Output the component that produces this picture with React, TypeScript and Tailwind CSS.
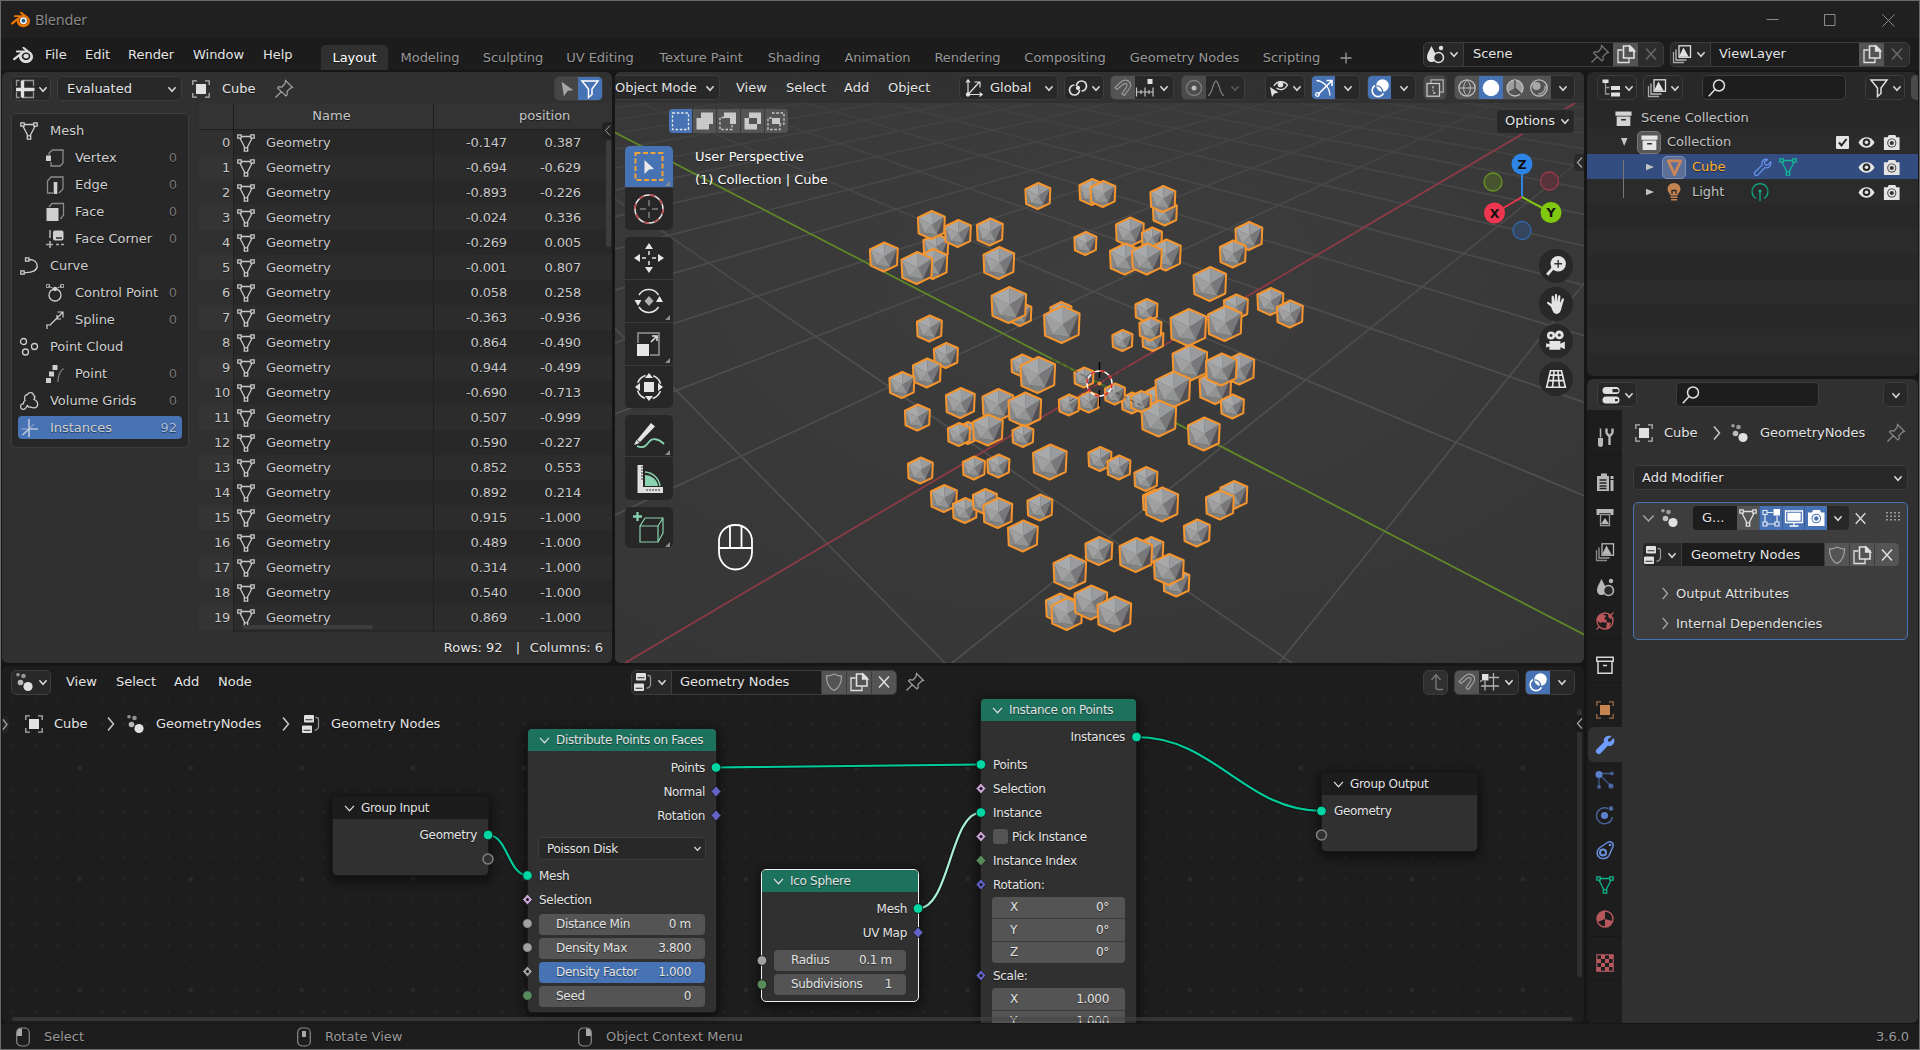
import React from "react";
import { SiBlender } from "react-icons/si";

type Kids = { children?: React.ReactNode };

const ICONS: Record<string, React.ReactNode> = {
  chev: <path d="M6 8l4 4.5L14 8" strokeWidth="1.7" />,
  bigChev: <path d="M4 6.500L10 13l6-6.500" strokeWidth="1.600" />,
  right: <path d="M8 3.5l5.5 6.5L8 16.5" strokeWidth="1.5" />,
  close: <path d="M5 4.5l10 11M15 4.5l-10 11" strokeWidth="1.5" />,
  plus: <path d="M10 4.5v11M4.5 10h11" />,
  mesh: <path d="M1.8 1.8h3.4v3.4H1.8zM14.8 1.8h3.4v3.4h-3.4zM8.3 14.8h3.4v3.4H8.3zM5.2 3.5h9.6M4 5.2L8.9 14.8M16 5.2L11.1 14.8" />,
  vertex: (<><path d="M4 7V5l3.5-3H18v13l-3 3H6V14" opacity=".6" /><rect x="1" y="7.5" width="5" height="5.5" fill="currentColor" stroke="none" /></>),
  edge: (<><path d="M8 18H2.5V6L6 2h12v12l-4 4" opacity=".6" /><path d="M10.5 7v12" strokeWidth="3.6" /></>),
  face: (<><path d="M4 5l3-3.5h11.5V13L15.500 17" opacity=".6" /><rect x="1.500" y="6" width="12" height="13" fill="currentColor" stroke="none" /></>),
  corner: (<><path d="M5 1v8M5 12v7M1 15.5h7M11 15.500h3M16 15.500h3" strokeWidth="1.600" opacity=".8" /><rect x="8" y="1.500" width="10.500" height="10" rx="2" fill="currentColor" stroke="none" /><path d="M11 9h6" stroke="#282828" /></>),
  curve: <path d="M6.500 1.800h3.400v3.400H6.500zM1.800 14.800h3.400v3.400H1.800zM9.900 3.500c5 0 8.300 2.500 8.300 6.500s-4 7-13 6.500" />,
  ctrl: (<><circle cx="10" cy="12" r="6" /><path d="M3 3l7 3 7-3M1.500 1.500h3v3h-3zM15.500 1.500h3v3h-3z" strokeWidth="1" opacity=".75" /><circle cx="10" cy="6" r="1.500" fill="currentColor" /></>),
  spline: <path d="M2 19v-4M1 15h5M5 15L18 2M12.500 2H18v5.500M12 5v4h4" strokeWidth="1.200" />,
  cloud3: (<><circle cx="4.500" cy="4.500" r="3" /><circle cx="15.500" cy="9.500" r="3" /><circle cx="6.500" cy="15" r="3" /></>),
  point: (<><path d="M18.500 4.500c-4 3-5.500 8-5.500 13.500" opacity=".5" /><path d="M7.500 1h5v5h-5zM4 7.500h5v5H4zM1 14h5v5H1z" fill="currentColor" stroke="none" /></>),
  volume: <path d="M3.500 18.300c-2.500-.8-2.500-4.300-.5-5.300l1.500-.3c-.3-1.500.3-2.500 1.500-3.200C4.500 6 6.500 3.500 8.500 3.500 9.500 1 14 1 14.500 4c1.500 1 1.500 3 .5 4.500 3.500 1 4.500 4.500 3 7-2 2-4.500 1.500-6.500.5-1.500.5-3-.5-3-2-1 2.500-2.500 5-5 4.300z" />,
  inst: (<><path d="M10 1v18M10 11h9M10 11l-6.500 6" strokeWidth="1.600" /><path d="M2 11h8M10 11l5-5" opacity=".5" /></>),
  sheet: (<><path d="M1.500 7V1.500h3M7 1.500h11.500V7M1.500 13v5.500h3M7 18.500h11.500V13" opacity=".6" /><path d="M7.500 1.500v17M1 10.500h18.500" strokeWidth="3.400" /></>),
  object: (<><path d="M1.800 6V1.800H6M14 1.800h4.200V6M18.200 14v4.200H14M6 18.200H1.800V14" opacity=".75" /><rect x="5" y="5" width="10" height="10" fill="currentColor" stroke="none" /></>),
  pin: <path d="M11.500 1.500L18.500 8.500l-2 .6-3.500 3.400.2 3.200-1.300 1.300L3.500 9l1.300-1.300 3.200.3 3-3.300zM7.500 12.500L1.500 18.500" strokeWidth="1.200" />,
  cursor: <path d="M4 2l13 9.500-6 .5-4.500 6z" fill="currentColor" stroke="none" />,
  funnel: <path d="M2 2h16l-6 8v5.500L8.500 18.500V10z" strokeWidth="1.500" />,
  scene: (<><path d="M6.500 2C9 7 11 10 11 13c0 3-2 5-4.500 5S2 16 2 13c0-3 2-6 4.500-11z" fill="currentColor" stroke="none" /><circle cx="13.500" cy="13.500" r="5" fill="#282828" strokeWidth="1.500" /><circle cx="16" cy="4" r="2.200" fill="currentColor" stroke="none" /></>),
  layers: (<><path d="M1.500 8v10.500H12" opacity=".7" /><path d="M4 5.500V16h10.500" opacity=".8" /><rect x="7" y="1.800" width="11.500" height="11.500" /><path d="M8 12l3.500-7 4 7z" fill="currentColor" /></>),
  copy: (<><path d="M6.500 6H2v12.500h11V14" /><path d="M7.500 2h6.500l4 4v8H7.500z" strokeWidth="1.600" /><path d="M13.500 2l5 5h-5z" fill="currentColor" /></>),
  axes: (<><path d="M4 16.500V2M2 4.500L4 1.800l2 2.700M3 16.500h15M15.500 14.500l2.700 2-2.700 2M4.500 16L15 4.500M10.500 4H16v5.500" strokeWidth="1.200" /><circle cx="4" cy="16.500" r="1.500" fill="currentColor" /></>),
  pivot: (<><path d="M8.500 8a5 5 0 1 1 5 5M11.500 12a5 5 0 1 1-5-5" strokeWidth="1.700" /><circle cx="10" cy="10" r="1.500" fill="currentColor" /></>),
  magnet: <path d="M2 9.500L8.500 3.500c3-2.500 8-1.500 9 2.500 1 4-2 5-6 11.500l-2.500-1.500c3-6 6-7 5-9.500-1-1.500-3-1-4 0L4 11.500z" strokeWidth="1.200" />,
  incr: (<><path d="M1.500 9.500v9M6 12v4M10 9.500v9M14 12v4M18 9.500v9M1.500 14h16.500" strokeWidth="1.200" opacity=".85" /><rect x="12.500" y="1" width="5" height="5" fill="currentColor" stroke="none" /></>),
  prop: (<><circle cx="10" cy="10" r="7.500" /><circle cx="10" cy="10" r="2.500" fill="#bbb" stroke="none" /></>),
  bell: <path d="M2 17.500c4 0 5-14.500 8-14.500s4 14.500 8 14.500" />,
  vis: (<><path d="M5 8c3-5.500 10.500-5.500 13.500-1-3 5.500-8 5.500-11 3" /><circle cx="11.500" cy="6.500" r="2.200" fill="currentColor" /><path d="M1 9l8.500 5.500-4 1-2.500 3.500z" fill="currentColor" stroke="none" /></>),
  gizmo: (<><path d="M2.500 2.500c8 1 13 7 13.500 15" /><path d="M4 16.500L17.500 3M12.500 2.500h5.500V8" strokeWidth="1.600" /><circle cx="3.500" cy="16.500" r="1.800" /></>),
  overlay: (<><circle cx="12.500" cy="7.500" r="6.300" fill="currentColor" stroke="none" /><path d="M5 7.500a6 6 0 1 0 8.500 7.800" strokeWidth="1.600" /><path d="M6.500 8a5.500 5.500 0 0 1 6 6" stroke="#4772b3" strokeWidth="1.300" /></>),
  xray: (<><path d="M6 5.500V1.800h12.200v12.400H15" opacity=".8" /><rect x="2" y="5.500" width="12.500" height="12.700" /><path d="M8 8v5M8 15h3" strokeWidth="1.300" strokeDasharray="2.500 1.500" /></>),
  wire: (<><circle cx="10" cy="10" r="8.200" /><path d="M2 10h16M10 2c-4.500 4-4.500 12 0 16M10 2c4.500 4 4.500 12 0 16" strokeWidth="1" /></>),
  solid: <circle cx="10" cy="10" r="8.300" fill="currentColor" stroke="none" />,
  matprev: (<><circle cx="10" cy="10" r="8" /><path d="M10 2a8 8 0 0 0-7 12l7-4zM10 10l6.500 5A8 8 0 0 0 10 2" fill="currentColor" stroke="none" opacity=".7" /><path d="M10 2v8l6 6" stroke="#444" /></>),
  render: (<><circle cx="10" cy="10" r="8.200" /><circle cx="7.500" cy="8" r="4" fill="currentColor" stroke="none" opacity=".8" /><path d="M16 8a6.500 6.500 0 0 1-7 8" strokeWidth="1.600" opacity=".7" /></>),
  outl: (<><path d="M4.500 5v11h4M4.500 9.500h4" opacity=".6" /><path d="M1.500 1.500h6v3.500h-6zM10 8h9v4h-9zM10 14.500h9v4h-9z" fill="currentColor" stroke="none" /></>),
  search: (<><circle cx="12" cy="7.500" r="5.500" strokeWidth="1.500" /><path d="M8 11.500L1.800 18.200" strokeWidth="1.500" /></>),
  coll: (<><path d="M1.500 2.500h17v4.500h-17zM2.800 8h14.400v10H2.800z" fill="currentColor" stroke="none" /><path d="M7.500 11.300h5" stroke="#282828" strokeWidth="1.700" /></>),
  collO: <path d="M1.800 2.300h16.400v4H1.800zM3 6.300h14v11.900H3zM8 10.500h4" strokeWidth="1.500" />,
  eye: (<><path d="M1.500 10c4-7.500 13-7.500 17 0-4 7.500-13 7.500-17 0z" fill="currentColor" stroke="none" /><circle cx="10" cy="9.800" r="4" fill="#282828" stroke="none" /><circle cx="10" cy="9.800" r="1.900" fill="currentColor" stroke="none" /></>),
  cam: (<><path d="M2 4.500h4L7 2h7l1 2.500h3.500V18H2z" fill="currentColor" stroke="none" /><circle cx="10.300" cy="10.500" r="4.800" fill="#333" stroke="none" /><circle cx="10.300" cy="10.500" r="3" fill="none" strokeWidth="1.600" /></>),
  camB: (<><path d="M2 4.500h4L7 2h7l1 2.500h3.500V18H2z" fill="currentColor" stroke="none" /><circle cx="10.300" cy="10.500" r="4.800" fill="#4772b3" stroke="none" /><circle cx="10.300" cy="10.500" r="3" fill="none" strokeWidth="1.600" /></>),
  meshObj: <path d="M3.500 3h13L10 17.500z" strokeWidth="3" strokeLinejoin="round" />,
  bulb: (<><path d="M10 1c4 0 6.500 3 6.500 6 0 3-2.500 4-3 6.500h-7C6 11 3.500 10 3.500 7c0-3 2.500-6 6.500-6zM6.500 14.500h7v1.500h-7zM7 17h6v1.500H7z" fill="currentColor" stroke="none" /><path d="M8 12V8.500h4V12" stroke="#2b2b2b" /></>),
  lightD: (<><path d="M6 16.500a8 8 0 1 1 8 0" /><circle cx="10" cy="9" r="1.600" fill="currentColor" stroke="none" /><path d="M10 10v9M10 13v6" strokeDasharray="3 1.200" /></>),
  wrench: <path d="M15.500 1.500c-4-1-7 2-5.800 5.800L2 15c-1.500 1.500 1 4.500 3 3l7.500-8c4 1.500 7-2 6-6L15.500 7.500l-3-.5-.3-3z" strokeLinejoin="round" />,
  wrenchF: <path d="M15.500 1.500c-4-1-7 2-5.800 5.800L2 15c-1.500 1.500 1 4.500 3 3l7.500-8c4 1.500 7-2 6-6L15.500 7.500l-3-.5-.3-3z" fill="currentColor" strokeLinejoin="round" />,
  props: (<><rect x="1.500" y="2" width="17" height="7" rx="3.500" fill="currentColor" stroke="none" /><rect x="1.500" y="11.500" width="17" height="7" rx="3.500" fill="currentColor" stroke="none" /><path d="M11.500 4h4.500a1.600 1.600 0 0 1 0 3.200h-4.500z" fill="#282828" stroke="none" /><path d="M14 14h2a1 1 0 0 1 0 2.200h-2z" fill="#282828" stroke="none" /></>),
  geo: (<><circle cx="13" cy="14.500" r="4.600" fill="currentColor" stroke="none" /><circle cx="5.500" cy="10.500" r="2.800" fill="currentColor" stroke="none" opacity=".8" /><circle cx="8.500" cy="4" r="2.300" fill="currentColor" stroke="none" opacity=".6" /><circle cx="3" cy="2.800" r="1.800" fill="currentColor" stroke="none" opacity=".6" /></>),
  tree: (<><rect x="3" y="1" width="10" height="7.500" rx="1" fill="currentColor" stroke="none" /><rect x="1" y="11.500" width="10" height="7.500" rx="1" fill="currentColor" stroke="none" /><path d="M4.500 5.700h7M2.500 16.200h7" stroke="#282828" strokeWidth="1.100" /><path d="M14.500 3.500h1a2 2 0 0 1 2 2v7.500a3.500 3.500 0 0 1-4 3" opacity=".6" /></>),
  shield: <path d="M10 2c2.500 1.500 5 2 7.500 2 0 7-1.500 11.500-7.500 14.500C4 15.500 2.500 11 2.500 4 5 4 7.500 3.500 10 2z" />,
  tool: (<><path d="M5.500 1.500v9" strokeWidth="1.500" /><path d="M3 11h5v7a2.500 2 0 0 1-5 0z" fill="currentColor" stroke="none" /><path d="M11.500 1.500v4c0 2 3 2.500 3 4.500v8M17.500 1.500v4c0 2-3 2.500-3 4.500" strokeWidth="2.400" /></>),
  rend: (<><path d="M2 4h4V1.500h6V4h2v15H2zM15.500 4h3v3h-3zM15.500 8h3v11h-3z" fill="currentColor" stroke="none" /><path d="M4.500 8h7M4.500 11h7M4.500 14h7M4.500 16.500h7" stroke="#222" strokeWidth="1.300" /></>),
  outp: (<><path d="M1.500 2h17v6h-3V6h-11v2h-3z" fill="currentColor" stroke="none" /><path d="M5.500 7.500h9V18.500h-9z" opacity=".8" /><path d="M6 17l4-6 4 6z" fill="currentColor" stroke="none" /></>),
  world: (<><circle cx="10" cy="10" r="8" strokeWidth="1.400" /><path d="M3 5l5-2 3 2-2 3 3 1-1 3-3-1-3 1-3-3zM12 11l4 1-2 5-3 1zM14 3l3 4-2 1-2-3z" fill="currentColor" stroke="none" /><path d="M1.500 18.500l3-3M18.500 1.500l-3 3" /></>),
  part: (<><circle cx="4" cy="4.500" r="3.500" fill="currentColor" stroke="none" /><path d="M5 5l11 11M4 6v11M6 3.500h11" opacity=".6" /><circle cx="16" cy="16" r="2.600" fill="currentColor" stroke="none" opacity=".7" /><circle cx="4" cy="17" r="2" fill="currentColor" stroke="none" opacity=".6" /><circle cx="17" cy="3.500" r="1.900" fill="currentColor" stroke="none" opacity=".6" /></>),
  phys: (<><circle cx="9.500" cy="10.500" r="3.600" fill="currentColor" stroke="none" /><path d="M13 3.500A8 8 0 1 0 17.500 12M14 18a8 8 0 0 0 3-5" opacity=".7" strokeWidth="1.500" /><circle cx="16" cy="3.500" r="2.300" fill="currentColor" stroke="none" opacity=".8" /></>),
  cons: (<><path d="M12.500 2.500c3-2 6.500.5 5.500 4l-4 9c-2.500 4.500-9.500 4-11.500-.5-1-3.500.5-6 2.500-7.500z" strokeWidth="1.500" /><circle cx="8" cy="12.500" r="3" strokeWidth="2" /><circle cx="15" cy="5" r="1.300" fill="currentColor" stroke="none" /></>),
  mater: (<><circle cx="10" cy="10" r="8" strokeWidth="1.400" /><path d="M10 2v8l-7.500 3A8 8 0 0 1 10 2zM10 10l7.500 2A8 8 0 0 1 10 18z" fill="currentColor" stroke="none" /></>),
  tex: (<><rect x="1.800" y="1.800" width="16.400" height="16.400" strokeWidth="1.200" /><path d="M6 2h4v4H6zM14 2h4v4h-4zM2 6h4v4H2zM10 6h4v4h-4zM6 10h4v4H6zM14 10h4v4h-4zM2 14h4v4H2zM10 14h4v4h-4z" fill="currentColor" stroke="none" /></>),
  up: <path d="M10 3v12.500q0 2 2 2h5M5.500 8L10 2.500 14.500 8" strokeWidth="1.400" />,
  snapgrid: (<><path d="M1 8v2M9 14h10M1 14h18M13.500 1v17.500M5 9v9.500M9 5.500h10" opacity=".75" /><rect x="2" y="2" width="6.500" height="6.500" fill="currentColor" stroke="none" /></>),
  editm: (<><path d="M2 2.500h4v4H2zM2 14h4v4H2zM14 14h4v4h-4zM6 4.500h6M4 6.500V14M6 16h8M16 8v6" strokeWidth="1.200" opacity=".85" /><rect x="12.500" y="1" width="6.500" height="6.500" fill="currentColor" stroke="none" /></>),
  monitor: (<><path d="M1.500 3h17v11.500h-17z" /><path d="M4 5.500h12v6.500H4z" fill="currentColor" /><path d="M10 15v3M5.500 18h9" /></>),
};

function Icon({ n, c = "text-[#e0e0e0]", s = "size-5" }: { n: string; c?: string; s?: string }) {
  return (
    <svg viewBox="0 0 20 20" className={`${s} ${c} shrink-0`} fill="none" stroke="currentColor" strokeWidth="1.3">
      {ICONS[n]}
    </svg>
  );
}

const Chev = ({ c = "text-[#d8d8d8]" }: { c?: string }) => <Icon n="chev" c={c} s="size-[18px]" />;

function Group({ w, children, dim = "" }: Kids & { w: string; dim?: string }) {
  return <div className={`flex h-[25px] shrink-0 items-stretch overflow-hidden rounded-[5px] border border-[#3d3d3d] bg-[#282828] ${w} ${dim}`}>{children}</div>;
}

function Cell({ w = "w-6", bg = "", children }: Kids & { w?: string; bg?: string }) {
  return <div className={`flex shrink-0 items-center justify-center ${w} ${bg}`}>{children}</div>;
}

const EditorButton = ({ n }: { n: string }) => (
  <Group w="w-10">
    <div className="flex items-center pl-[3px]">
      <Icon n={n} />
      <div className="-ml-px flex"><Chev /></div>
    </div>
  </Group>
);

const Label = ({ w, children, c = "text-[#e5e5e5]" }: Kids & { w: string; c?: string }) => (
  <div className={`shrink-0 ${w} ${c}`}>{children}</div>
);

/* ---------- top bars ---------- */

function TitleBar() {
  return (
    <div className="flex h-[37px] items-center bg-[#202020] pl-[10px]">
      <div className="relative flex w-6">
        <SiBlender className="size-[19px] text-[#ea7600]" />
        <svg viewBox="0 0 24 24" className="absolute left-0 top-0 size-[19px]">
          <circle cx="15.700" cy="13.500" r="4.400" fill="#fff" />
          <circle cx="15.700" cy="13.500" r="2.500" fill="#265787" />
        </svg>
      </div>
      <div className="pt-px font-['Open_Sans'] text-[14.500px] tracking-[-0.150px] text-[#8c8c8c]">Blender</div>
      <svg viewBox="0 0 160 20" className="ml-auto mr-[13px] h-5 w-40 text-[#8c8c8c]" fill="none" stroke="currentColor">
        <path d="M20.500 9.500h12M78.500 4.500h10.500v11H78.500zM136.500 4.500l12 12M148.500 4.500l-12 12" />
      </svg>
    </div>
  );
}

function TopBar() {
  const tab = "flex h-full shrink-0 items-center justify-center text-[#989898]";
  return (
    <div className="flex h-8 items-stretch bg-[#1c1c1c] pl-[12px]">
      <div className="flex w-8 items-center pt-px"><SiBlender className="size-5 text-[#dcdcdc]" /></div>
      <div className="flex items-center pt-px">
        <Label w="w-10">File</Label>
        <Label w="w-[43px]">Edit</Label>
        <Label w="w-[65px]">Render</Label>
        <Label w="w-[70px]">Window</Label>
        <Label w="w-[58px]">Help</Label>
      </div>
      <div className="flex h-[25px] self-end">
        <div className="flex w-[67px] items-center justify-center rounded-t-[5px] bg-[#303030] text-white">Layout</div>
        <div className={`${tab} w-[84px]`}>Modeling</div>
        <div className={`${tab} w-[82px]`}>Sculpting</div>
        <div className={`${tab} w-[92px]`}>UV Editing</div>
        <div className={`${tab} w-[110px]`}>Texture Paint</div>
        <div className={`${tab} w-[76px]`}>Shading</div>
        <div className={`${tab} w-[91px]`}>Animation</div>
        <div className={`${tab} w-[89px]`}>Rendering</div>
        <div className={`${tab} w-[106px]`}>Compositing</div>
        <div className={`${tab} w-[133px]`}>Geometry Nodes</div>
        <div className={`${tab} w-[81px]`}>Scripting</div>
        <div className={`${tab} w-[28px]`}><Icon n="plus" c="text-[#989898]" /></div>
      </div>
      <div className="ml-auto flex items-center gap-[6px] pr-[9px]">
        <Group w="w-[241px]">
          <Cell w="w-[39px]"><Icon n="scene" /><Chev /></Cell>
          <div className="flex flex-1 items-center justify-between border-l border-[#3d3d3d] bg-[#1d1d1d] pl-[9px] pr-[3px] text-[#e5e5e5]">Scene<Icon n="pin" c="text-[#777]" /></div>
          <Cell w="w-[25px]" bg="bg-[#545454]"><Icon n="copy" /></Cell>
          <Cell w="w-[25px]" bg="bg-[#2d2d2d]"><Icon n="close" c="text-[#6a6a6a]" /></Cell>
        </Group>
        <Group w="w-[240px]">
          <Cell w="w-[39px]"><Icon n="layers" /><Chev /></Cell>
          <div className="flex flex-1 items-center border-l border-[#3d3d3d] bg-[#1d1d1d] pl-[8px] text-[#e5e5e5]">ViewLayer</div>
          <Cell w="w-[25px]" bg="bg-[#545454]"><Icon n="copy" /></Cell>
          <Cell w="w-[25px]" bg="bg-[#2d2d2d]"><Icon n="close" c="text-[#6a6a6a]" /></Cell>
        </Group>
      </div>
    </div>
  );
}

/* ---------- spreadsheet ---------- */

const TREE: [string, string, string, boolean][] = [
  ["mesh", "Mesh", "", false],
  ["vertex", "Vertex", "0", true],
  ["edge", "Edge", "0", true],
  ["face", "Face", "0", true],
  ["corner", "Face Corner", "0", true],
  ["curve", "Curve", "", false],
  ["ctrl", "Control Point", "0", true],
  ["spline", "Spline", "0", true],
  ["cloud3", "Point Cloud", "", false],
  ["point", "Point", "0", true],
  ["volume", "Volume Grids", "0", false],
  ["inst", "Instances", "92", false],
];

const ROWS: [string, string][] = [
  ["-0.147", "0.387"], ["-0.694", "-0.629"], ["-0.893", "-0.226"], ["-0.024", "0.336"], ["-0.269", "0.005"],
  ["-0.001", "0.807"], ["0.058", "0.258"], ["-0.363", "-0.936"], ["0.864", "-0.490"], ["0.944", "-0.499"],
  ["-0.690", "-0.713"], ["0.507", "-0.999"], ["0.590", "-0.227"], ["0.852", "0.553"], ["0.892", "0.214"],
  ["0.915", "-1.000"], ["0.489", "-1.000"], ["0.314", "-1.000"], ["0.540", "-1.000"], ["0.869", "-1.000"],
];

function Spreadsheet() {
  return (
    <section className="relative flex w-[610px] shrink-0 flex-col overflow-hidden rounded-[6px] bg-[#303030]">
      <div className="flex h-[31px] shrink-0 items-center pl-[9px] pt-[2px]">
        <EditorButton n="sheet" />
        <div className="ml-[6px] flex">
          <Group w="w-[125px]">
            <div className="flex flex-1 items-center justify-between pl-[9px] text-[#e5e5e5]">Evaluated<Chev /></div>
          </Group>
        </div>
        <div className="ml-[9px] flex w-[31px]"><Icon n="object" /></div>
        <Label w="w-[52px]">Cube</Label>
        <Icon n="pin" c="text-[#a0a0a0]" />
        <div className="ml-auto flex pr-[9px]">
          <Group w="w-[49px]">
            <Cell w="w-[23px]" bg="bg-[#454545]"><Icon n="cursor" c="text-[#a5a5a5]" s="size-[18px]" /></Cell>
            <Cell w="w-6" bg="bg-[#4772b3]"><Icon n="funnel" c="text-white" /></Cell>
          </Group>
        </div>
      </div>
      <div className="flex h-[529px] shrink-0">
        <div className="w-[197px] shrink-0 pl-[9px] pt-[10px]">
          <div className="w-[178px] rounded-[5px] border border-[#3d3d3d] bg-[#272727] px-[6px] pb-[6px] pt-[3px]">
            {TREE.map(([ic, label, n, child]) => (
              <div key={label} className={`flex h-[27px] items-center ${child ? "pl-[27px]" : "pl-px"}`}>
                <div className={`flex h-[23px] flex-1 items-center rounded-[4px] ${n === "92" ? "-ml-px bg-[#4772b3] pl-px" : ""}`}>
                  <Icon n={ic} c={n === "92" ? "text-[#b9c6dc]" : "text-[#cfcfcf]"} />
                  <span className={`${child ? "pl-[10px]" : "pl-[11px]"} text-[#cfcfcf]`}>{label}</span>
                  <span className={`ml-auto pr-[5px] ${n === "92" ? "text-[#a9bad6]" : "text-[#757575]"}`}>{n}</span>
                </div>
              </div>
            ))}
          </div>
        </div>
        <div className="flex min-w-0 flex-1 flex-col">
          <div className="flex h-[27px] shrink-0 items-center border-b border-[#1f1f1f] bg-[#333] text-[#c4c4c4]">
            <div className="h-full w-[35px] border-r border-[#1f1f1f]" />
            <div className="flex h-full w-[200px] items-center justify-center border-r border-[#1f1f1f] pr-[4px]">Name</div>
            <div className="pl-[85px]">position</div>
          </div>
          {ROWS.map(([a, b], i) => (
            <div key={i} className={`flex h-[25px] shrink-0 items-center text-[#c8c8c8] ${i % 2 ? "bg-[#2c2c2c]" : "bg-[#282828]"}`}>
              <div className={`flex h-full w-[35px] items-center justify-end border-r border-[#1f1f1f] pr-[3px] tracking-[-0.250px] ${i % 2 ? "bg-[#343434]" : "bg-[#303030]"}`}>{i}</div>
              <div className="flex h-full w-[200px] items-center gap-[10px] border-r border-[#1f1f1f] pl-[2px]">
                <Icon n="mesh" c="text-[#c8c8c8]" />Geometry
              </div>
              <div className="w-[73px] text-right tracking-[-0.150px]">{a}</div>
              <div className="w-[74px] text-right tracking-[-0.150px]">{b}</div>
            </div>
          ))}
          <div className="flex flex-1 bg-[#282828]">
            <div className="w-[35px] border-r border-[#1f1f1f] bg-[#303030]" />
            <div className="w-[200px] border-r border-[#1f1f1f]" />
          </div>
        </div>
      </div>
      <div className="flex flex-1 items-center justify-end pr-[9px] text-[#e0e0e0]">
        <Label w="w-[72px]">Rows: 92</Label><Label w="w-[14px]">|</Label>Columns: 6
      </div>
      <div className="absolute right-[1px] top-[68px] h-[107px] w-[5px] rounded-full bg-[#3d3d3d]" />
      <div className="absolute left-[241px] top-[553px] h-[4px] w-[130px] rounded-full bg-[#3d3d3d]" />
      <div className="absolute right-0 top-[50px] flex h-[17px] w-[10px] items-center overflow-hidden rounded-l-[4px] bg-[#232323]">
        <svg viewBox="0 0 10 17" className="h-[17px] w-[10px] shrink-0" fill="none" stroke="#a0a0a0"><path d="M8 3.500L3.500 8.500 8 13.500" /></svg>
      </div>
    </section>
  );
}

/* ---------- 3D viewport ---------- */

/* x, y, radius; painted in order, nearest last */
const SPHERES: [number, number, number][] = [
  [1038, 196, 13], [1092, 192, 13], [1103, 194, 13], [1165, 213, 12.500], [1163, 199, 13],
  [936, 247, 13], [931.500, 225, 14], [958, 233.500, 13.500], [990, 232, 13.500], [884, 257, 14.500],
  [933, 264, 15], [917, 268, 16], [999, 263, 16], [1085.500, 243.500, 11.500],
  [1130, 232, 14.500], [1152, 238, 10.500], [1166, 255, 15.500], [1125, 259, 15.500], [1147, 259, 15.500],
  [1249, 236, 14], [1233, 254, 13.500], [1210, 284, 17], [1236, 307, 12.500], [1270.500, 301.500, 13.500], [1290, 314, 13.500],
  [1020, 314, 12], [1009, 305, 18], [1061, 313, 11], [1062, 324.500, 18.500], [929.500, 328.500, 13],
  [1146.500, 310.500, 11.500], [1153, 340, 11], [1150.500, 329, 11.500], [1122.500, 340.500, 10.500],
  [1188.500, 327.500, 18.500], [1225, 323.500, 17.500], [1190, 363, 18], [1239.500, 369, 15.500], [1215.500, 387.500, 16.500],
  [1221.500, 369.500, 16], [1155, 398, 11], [1173, 389.500, 18], [1232.500, 406.500, 12], [1159, 418.500, 18], [1204, 434, 16.500],
  [1132, 403, 10.500], [1141, 401.500, 10.500], [1115, 394, 10.500], [1084, 377.500, 10], [1089, 402, 10.500], [1069, 405, 10.500],
  [946, 355.500, 12.500], [927, 373, 14.500], [902, 385, 13], [917.500, 417.500, 13], [1022, 365.500, 11], [1038, 375, 18],
  [960.500, 403, 15], [998, 405, 16], [1025, 409.500, 17], [968, 433, 11], [959, 434.500, 11.500], [988, 430, 15.500], [1023, 436, 11],
  [920.500, 470.500, 13], [974, 468, 11.500], [998.500, 466, 11.500], [1050, 462, 17.500],
  [944, 498.500, 13.500], [965, 510.500, 12.500], [985, 501.500, 12.500], [998, 513, 15], [1040, 507.500, 13], [1023, 536, 15.500],
  [1100, 459, 12], [1119, 467.500, 12], [1146, 479, 12], [1155, 502, 12.500], [1162, 504.500, 17],
  [1234, 495, 14], [1220, 505, 14.500], [1197, 533, 13.500], [1099, 551, 14], [1151, 550, 13], [1136, 555, 17],
  [1176.500, 583, 13.500], [1169, 569.500, 15.500], [1070, 572, 17], [1060, 608, 14.500], [1067, 614, 16], [1091, 602.500, 17], [1114.500, 614, 17.500],
];

const FACES: [string, string][] = [
  ["-.97,-.52 .02,-1 .05,-.02", "#a8a9aa"],
  [".02,-1 .95,-.6 .05,-.02", "#9a9b9d"],
  [".95,-.6 .4,.68 .05,-.02", "#78787a"],
  [".95,-.6 .9,.56 .4,.68", "#524e51"],
  [".9,.56 -.02,1 .4,.68", "#666567"],
  [".05,-.02 .4,.68 -.5,.55", "#939494"],
  [".4,.68 -.02,1 -.5,.55", "#7f8080"],
  ["-.97,-.52 .05,-.02 -.5,.55", "#9fa09f"],
  ["-.97,-.52 -.5,.55 -.92,.6", "#888888"],
  ["-.92,.6 -.5,.55 -.02,1", "#7e7e7f"],
];

const STEPS = Array.from({ length: 30 }, (_, k) => k - 14).filter((k) => k !== 0);

function Scene3D() {
  return (
    <svg viewBox="615 72 969 591" className="absolute inset-0 h-[591px] w-[969px]">
      <defs>
        <linearGradient id="fade" x1="0" y1="72" x2="0" y2="400" gradientUnits="userSpaceOnUse">
          <stop offset="0" stopColor="#fff" stopOpacity=".15" />
          <stop offset=".45" stopColor="#fff" stopOpacity=".75" />
          <stop offset="1" stopColor="#fff" />
        </linearGradient>
        <mask id="m" maskUnits="userSpaceOnUse" x="615" y="72" width="969" height="591">
          <rect x="615" y="72" width="969" height="591" fill="url(#fade)" />
        </mask>
        <radialGradient id="bg" cx=".5" cy=".35" r=".75">
          <stop offset="0" stopColor="#3d3d3d" />
          <stop offset="1" stopColor="#363636" />
        </radialGradient>
        <g id="ico">
          {FACES.map(([p, f]) => <polygon key={p} points={p} fill={f} stroke={f} strokeWidth=".02" />)}
          <polygon points="-.97,-.52 .02,-1 .95,-.6 .9,.56 -.02,1 -.92,.6" fill="none" stroke="#f6952d" strokeWidth="2" strokeLinejoin="round" vectorEffect="non-scaling-stroke" />
        </g>
      </defs>
      <rect x="615" y="72" width="969" height="591" fill="url(#bg)" />
      <g stroke="#4f4f4f" strokeWidth="1.700" mask="url(#m)">
        {STEPS.map((k) => <line key={`r${k}`} x1={1868} y1={-70} x2={625 + 327 * k} y2={663} />)}
        {STEPS.map((k) => <line key={`g${k}`} x1={220} y1={-72} x2={1639 + 347 * k} y2={663} />)}
      </g>
      <path d="M625 663L1575 103" stroke="#8c3b46" strokeWidth="1.800" />
      <path d="M558 103L1639 663" stroke="#608728" strokeWidth="1.800" />
      {SPHERES.map(([x, y, r], i) => (
        <use key={i} href="#ico" transform={`translate(${x} ${y}) scale(${r})`} />
      ))}
      <path d="M1070 401L1128 367M1052 359L1146 408" stroke="#222" strokeWidth="1" strokeDasharray="5 3" opacity=".6" />
      <path d="M1099.500 362v16M1099.500 390v16" stroke="#000" strokeWidth="1.300" />
      <circle cx="1099.500" cy="383.500" r="12.500" fill="none" stroke="#fff" strokeWidth="1.500" />
      <circle cx="1099.500" cy="383.500" r="12.500" fill="none" stroke="#e0201c" strokeWidth="1.500" strokeDasharray="4.900 4.900" />
      <circle cx="1099.500" cy="383.500" r="2" fill="#f5922e" />
      {/* navigation axes */}
      <g strokeWidth="2">
        <path d="M1522 197V170" stroke="#2f83e3" />
        <path d="M1522 197L1500 210" stroke="#e8364f" />
        <path d="M1522 197L1546 210" stroke="#7ec611" />
        <circle cx="1493" cy="182" r="9" fill="#47552f" stroke="#6a961f" strokeWidth="1.300" />
        <circle cx="1549.500" cy="181" r="9" fill="#57343b" stroke="#a03a4b" strokeWidth="1.300" />
        <circle cx="1522" cy="230.500" r="9" fill="#34465e" stroke="#3068ac" strokeWidth="1.300" />
        <circle cx="1522" cy="164" r="10.500" fill="#2e84e6" />
        <circle cx="1494.500" cy="213" r="10.500" fill="#ee3650" />
        <circle cx="1551" cy="212.500" r="10.500" fill="#80c910" />
      </g>
      <g className="text-[12.500px] font-bold [text-shadow:none]" textAnchor="middle" fill="#111">
        <text x="1522" y="168.500">Z</text><text x="1494.500" y="217.500">X</text><text x="1551" y="217">Y</text>
      </g>
      {/* mouse overlay */}
      <g fill="none" stroke="#fff" strokeWidth="1.800">
        <path d="M719 541a16 16 0 0 1 16-16h1a16 16 0 0 1 16 16v11a16.500 17.500 0 0 1-33 0zM719 548h33M730 525v23M741.500 525v23" />
      </g>
    </svg>
  );
}

const ToolBox = ({ children, h, on = false }: Kids & { h: string; on?: boolean }) => (
  <div className={`flex ${h} items-center justify-center ${on ? "bg-[#4772b3]" : "bg-[#272727]"}`}>
    <svg viewBox="0 0 48 42" className="h-[42px] w-12" fill="none" stroke="#e6e6e6" strokeWidth="1.500">{children}</svg>
  </div>
);
const Tick = () => <path d="M45 35v5h-5z" fill="#8c8c8c" stroke="none" />;

function Toolbar() {
  const grp = "flex flex-col gap-px overflow-hidden rounded-[5px] bg-[#3a3a3a]";
  return (
    <div className="absolute left-[10px] top-[74px] flex w-12 flex-col gap-[7px]">
      <div className={grp}>
        <ToolBox h="h-[41px]" on>
          <rect x="10.500" y="7" width="27" height="27" stroke="#f0a336" strokeWidth="2" strokeDasharray="5 2.500" />
          <path d="M19.500 14l9.500 9-5 .5-4.500 4.500z" fill="#e8e8e8" stroke="none" /><Tick />
        </ToolBox>
        <ToolBox h="h-[42px]">
          <circle cx="24" cy="21" r="14" /><circle cx="24" cy="21" r="14" stroke="#c2434a" strokeDasharray="5.500 5.500" />
          <path d="M24 12v6M24 24v6M15 21h6M27 21h6" stroke="#aaa" strokeWidth="1" />
        </ToolBox>
      </div>
      <div className={grp}>
        <ToolBox h="h-[42px]">
          <path d="M24 6l4 6h-8zM24 36l4-6h-8zM9 21l6-4v8zM39 21l-6-4v8z" fill="#e6e6e6" stroke="none" />
          <path d="M24 14v4M24 24v4M17 21h4M27 21h4" />
        </ToolBox>
        <ToolBox h="h-[42px]">
          <path d="M14 15a11.500 11.500 0 0 1 19.500 0M14 27a11.500 11.500 0 0 0 19.500 0" />
          <path d="M24 16l4.500 5-4.500 5-4.500-5z" fill="#b0b0b0" stroke="none" />
          <path d="M13 26l-3.500-6h7zM34.500 16l-3.500 6h7z" fill="#e6e6e6" stroke="none" /><Tick />
        </ToolBox>
        <ToolBox h="h-[42px]">
          <path d="M13 20V10h21v22H25" stroke="#999" />
          <rect x="12" y="21" width="12" height="12" fill="#e6e6e6" stroke="none" />
          <path d="M26 19l5-5M27 13h5v5" /><Tick />
        </ToolBox>
        <ToolBox h="h-[42px]">
          <circle cx="24" cy="21" r="12" strokeDasharray="11 7.850" strokeDashoffset="-4" />
          <rect x="19" y="16" width="10" height="10" fill="#e6e6e6" stroke="none" />
          <path d="M24 7l4 5h-8zM24 35l4-5h-8zM10 21l5-4v8zM38 21l-5-4v8z" fill="#e6e6e6" stroke="none" />
        </ToolBox>
      </div>
      <div className={grp}>
        <ToolBox h="h-[41px]">
          <path d="M12 25L26 8l4 3.500L15 27z" fill="#e6e6e6" stroke="none" /><path d="M9 30l2.500-5 3 3z" fill="#e6e6e6" stroke="none" />
          <path d="M12 31c6 3 9 0 12-4s9-4 15 2" stroke="#8bd3b0" strokeWidth="1.800" /><Tick />
        </ToolBox>
        <ToolBox h="h-[43px]">
          <path d="M12.500 7h5.500v22h20v6H12.500z" fill="#e0e0e0" stroke="none" />
          <path d="M20 17a13 13 0 0 1 13 11H20z" fill="#8bd3b0" stroke="none" /><path d="M20 14a16 16 0 0 1 15 14" stroke="#8bd3b0" />
          <path d="M16 9h2M16 12h2M16 15h2M16 18h2M16 21h2M22 31v2M25 31v2M28 31v2M31 31v2M34 31v2" stroke="#333" strokeWidth="1" />
        </ToolBox>
      </div>
      <div className={grp}>
        <ToolBox h="h-[41px]">
          <path d="M15 19h18v16H15zM15 19l5-8h18v15l-5 9M33 19l5-8" stroke="#8bd3b0" strokeWidth="1.200" />
          <path d="M12.500 5v9M8 9.500h9" stroke="#8bd3b0" strokeWidth="2.300" /><Tick />
        </ToolBox>
      </div>
    </div>
  );
}

const Nav = ({ children }: Kids) => (
  <div className="flex size-[34px] items-center justify-center rounded-full bg-[#282828]">
    <svg viewBox="0 0 20 20" className="size-[22px]" fill="#e4e4e4" stroke="none">{children}</svg>
  </div>
);

function Viewport() {
  return (
    <section className="relative w-[969px] shrink-0 overflow-hidden rounded-[6px] bg-[#393939]">
      <Scene3D />
      <div className="relative flex h-[31px] items-center bg-[#303030]/80">
        <div className="-ml-[6px] flex"><Group w="w-[111px]"><div className="flex flex-1 items-center justify-between pl-[5px] text-[#e5e5e5]">Object Mode<Chev /></div></Group></div>
        <div className="ml-[16px] flex">
          <Label w="w-[50px]">View</Label><Label w="w-[58px]">Select</Label><Label w="w-11">Add</Label><Label w="w-[71px]">Object</Label>
        </div>
        <div className="flex">
          <Group w="w-[99px]"><div className="flex flex-1 items-center pl-[4px] text-[#e5e5e5]"><Icon n="axes" /><span className="ml-[6px] w-[50px]">Global</span><Chev /></div></Group>
          <div className="w-[6px]" />
          <EditorButton n="pivot" />
          <div className="w-[6px]" />
          <Group w="w-[64px]"><Cell bg="bg-[#545454]"><Icon n="magnet" c="text-[#9a9a9a]" /></Cell><Cell w="w-[38px]"><Icon n="incr" /><Chev /></Cell></Group>
          <div className="w-[7px]" />
          <Group w="w-[64px]"><Cell bg="bg-[#4c4c4c]"><Icon n="prop" c="text-[#7c7c7c]" /></Cell><Cell w="w-[38px]"><Icon n="bell" c="text-[#7a7a7a]" /><Chev c="text-[#5a5a5a]" /></Cell></Group>
        </div>
        <div className="ml-auto flex pr-[9px]">
          <EditorButton n="vis" />
          <div className="w-[6px]" />
          <Group w="w-[49px]"><Cell w="w-[23px]" bg="bg-[#4772b3]"><Icon n="gizmo" c="text-white" /></Cell><Cell w="w-[25px]"><Chev /></Cell></Group>
          <div className="w-[7px]" />
          <Group w="w-[49px]"><Cell w="w-[23px]" bg="bg-[#4772b3]"><Icon n="overlay" c="text-white" /></Cell><Cell w="w-[25px]"><Chev /></Cell></Group>
          <div className="w-[7px]" />
          <Group w="w-[24px]"><Cell w="w-[22px]" bg="bg-[#484848]"><Icon n="xray" c="text-[#c8c8c8]" /></Cell></Group>
          <div className="w-[7px]" />
          <Group w="w-[121px]">
            <Cell bg="bg-[#545454]"><Icon n="wire" c="text-[#bdbdbd]" /></Cell>
            <Cell bg="bg-[#4772b3]"><Icon n="solid" c="text-white" /></Cell>
            <Cell bg="bg-[#545454]"><Icon n="matprev" c="text-[#bdbdbd]" /></Cell>
            <Cell bg="bg-[#545454]"><Icon n="render" c="text-[#bdbdbd]" /></Cell>
            <Cell w="w-[23px]"><Chev /></Cell>
          </Group>
        </div>
      </div>
      <div className="relative flex h-[35px] items-center justify-between pl-[54px] pr-[9px] pt-px">
        <svg viewBox="0 0 119 24" className="h-6 w-[119px]">
          <rect width="119" height="24" rx="4" fill="#545454" />
          <path d="M4 0h19v24H4a4 4 0 0 1-4-4V4a4 4 0 0 1 4-4z" fill="#4772b3" />
          <path d="M23.500 0v24M47.500 0v24M71.500 0v24M95.500 0v24" stroke="#3a3a3a" />
          <g fill="none" stroke="#e8e8e8" strokeWidth="1.300" strokeDasharray="2.500 1.800">
            <rect x="3.500" y="4" width="16" height="16.500" /><path d="M55 8.500h-4V20.500h12V15" opacity=".8" /><path d="M103 4h12v11h-4M111 15v5.500H99V9h4" opacity=".8" />
          </g>
          <path d="M32 3.500h12V15h-4v5.500H27.500V9H32zM55 3.500h12V15h-6V9h-6zM80 3.500h12V15h-4v5.500H75.500V9H80zM80 9v6h8V9zM103 9h8v6h-8z" fill="#c9c9c9" fillRule="evenodd" />
        </svg>
        <Group w="w-[79px]"><div className="flex flex-1 items-center justify-between pl-[8px] text-[#e5e5e5]">Options<Chev /></div></Group>
      </div>
      <div className="relative ml-[80px] mt-[7px] text-[13px] leading-[23px] text-white">
        <div>User Perspective</div><div>(1) Collection | Cube</div>
      </div>
      <Toolbar />
      <div className="absolute right-[11px] top-[177px] flex flex-col gap-[3.500px]">
        <Nav><circle cx="12" cy="8" r="7" /><path d="M8 11L2 18" stroke="#e4e4e4" strokeWidth="2.600" /><path d="M12 4.500v7M8.500 8h7" stroke="#333" strokeWidth="1.300" /></Nav>
        <Nav><path d="M5.500 12.500L2 9.500c-.8-1 .8-2 1.600-1.200L6 10V3.500c0-1.400 1.800-1.400 2 0l.6 4.500L9 2c0-1.400 2-1.400 2 0l.2 6 .8-5c.3-1.400 2-1.200 2 .2L13.600 9l1.800-3.500c.7-1.200 2.200-.5 1.800.7L15 13.500c-.5 3-1.500 5.500-4.500 5.500S7 16 5.500 12.500z" /></Nav>
        <Nav><circle cx="5.500" cy="5" r="3.700" /><circle cx="13" cy="4.500" r="4" /><circle cx="5.500" cy="5" r="1.300" fill="#333" /><circle cx="13" cy="4.500" r="1.400" fill="#333" /><path d="M4 10h10v2.500l4-2v7l-4-2V18H4v-3l-3 1v-4l3 1z" /></Nav>
        <Nav><path d="M5 2.500h10L18.500 17.500h-17zM4.200 6.500h11.600M3.200 11.500h13.600M8.300 2.500l-1.500 15M11.700 2.500l1.500 15" fill="none" stroke="#e4e4e4" strokeWidth="1.500" /></Nav>
      </div>
      <div className="absolute right-0 top-[82px] flex h-[17px] w-[10px] items-center rounded-l-[4px] bg-[#2a2a2a]">
        <svg viewBox="0 0 10 17" className="h-[17px] w-[10px]" fill="none" stroke="#a0a0a0" strokeWidth="1.300"><path d="M8 3.500L3.500 8.500 8 13.500" /></svg>
      </div>
    </section>
  );
}

/* ---------- node editor ---------- */

function Node({ pos, title, head = "bg-[#1d725e]", ring = "border-[#191919]", children }: Kids & { pos: string; title: string; head?: string; ring?: string }) {
  return (
    <div className={`absolute overflow-hidden rounded-[5px] border bg-[#303030] text-[12px] tracking-[-0.300px] text-[#e3e3e3] shadow-[0_3px_10px_3px_rgba(0,0,0,.45)] ${pos} ${ring}`}>
      <div className={`flex h-[22px] items-center pl-[9px] ${head}`}>
        <Icon n="bigChev" c="text-[#dcdcdc]" s="size-[15px]" />
        <span className="pl-[4px]">{title}</span>
      </div>
      {children}
    </div>
  );
}

const Out = ({ children }: Kids) => <div className="flex h-6 items-center justify-end pr-[11px]">{children}</div>;
const In = ({ children }: Kids) => <div className="flex h-6 items-center pl-[11px]">{children}</div>;
const Field = ({ a, b, on = false }: { a: string; b: string; on?: boolean }) => (
  <div className={`flex h-[20.500px] items-center justify-between rounded-[4px] pl-[17px] pr-[14px] ${on ? "bg-[#4772b3]" : "bg-[#545454]"}`}><span>{a}</span><span>{b}</span></div>
);
const VecField = ({ v, axes }: { v: string; axes: string[] }) => (
  <div className="mx-[11px] flex flex-col gap-px overflow-hidden rounded-[4px] bg-[#3c3c3c]">
    {axes.map((a) => (
      <div key={a} className="flex h-[21.500px] items-center justify-between bg-[#545454] pl-[18px] pr-[16px]"><span>{a}</span><span>{v}</span></div>
    ))}
  </div>
);

const TEAL = "#00d6a3", BLUE = "#6363c7", GREY = "#a1a1a1", GREEN = "#598c5c", PINK = "#cca6d6";
const DOTS: [number, number, string][] = [
  [488, 835, TEAL], [716, 767.500, TEAL], [527.500, 875.500, TEAL], [527.500, 923.500, GREY], [527.500, 947.500, GREY], [527.500, 995.500, GREEN],
  [918, 908.500, TEAL], [762, 960.500, GREY], [762, 984.500, GREEN], [1136.500, 737, TEAL], [981, 764.500, TEAL], [981, 812.500, TEAL], [1321.500, 811, TEAL],
];
const DIAMONDS: [number, number, string, boolean][] = [
  [716, 791.500, BLUE, false], [716, 815.500, BLUE, false], [527.500, 899.500, PINK, true], [527.500, 971.500, GREY, true],
  [918, 932.500, BLUE, false], [981, 788.500, PINK, true], [981, 836.500, PINK, true], [981, 860.500, GREEN, false],
  [981, 884.500, BLUE, true], [981, 975.500, BLUE, true],
];

const Crumb = ({ n, w, children }: Kids & { n: string; w: string }) => (
  <div className={`flex shrink-0 items-center ${w}`}><Icon n={n} /><span className="pl-[10px] text-[#e3e3e3]">{children}</span></div>
);

function NodeEditor() {
  return (
    <section className="relative mt-[3px] h-[357px] w-[1582px] overflow-hidden rounded-[6px] bg-[#1d1d1d]">
      <svg viewBox="2 666 1582 357" className="absolute inset-0 h-[357px] w-[1582px]">
        <defs>
          <pattern id="dot" x="2.100" y="690.300" width="22.200" height="22.200" patternUnits="userSpaceOnUse"><rect x="9.600" y="9.600" width="3" height="3" fill="#232323" /></pattern>
          <pattern id="dotL" x="24.300" y="712.500" width="111" height="111" patternUnits="userSpaceOnUse"><rect x="53.500" y="53.500" width="4" height="4" fill="#2b2b2b" /></pattern>
        </defs>
        <rect x="2" y="696" width="1582" height="321" fill="url(#dot)" />
        <rect x="2" y="696" width="1582" height="321" fill="url(#dotL)" />
        <g fill="none" strokeWidth="4" stroke="#141414">
          <path d="M488 835C508 835 508 875.500 528 875.500M716 767.500L981 764.500M918 908.500C950 908.500 950 812.500 981 812.500M1136 737C1215 737 1245 811 1322 811" />
        </g>
        <g fill="none" strokeWidth="2.200" stroke="#00cb9b">
          <path d="M488 835C508 835 508 875.500 528 875.500M716 767.500L981 764.500M1136 737C1215 737 1245 811 1322 811" />
          <path d="M918 908.500C950 908.500 950 812.500 981 812.500" stroke="#a9efdb" />
        </g>
      </svg>

      <Node pos="left-[330px] top-[130px] w-[157px] h-[80px]" title="Group Input" head="bg-[#1c1c1c]">
        <div className="pt-[4px]"><Out>Geometry</Out></div>
      </Node>
      <Node pos="left-[525px] top-[62px] w-[190px] h-[285px]" title="Distribute Points on Faces">
        <div className="pt-[5px]">
          <Out>Points</Out><Out>Normal</Out><Out>Rotation</Out>
          <div className="mx-[10px] mb-[4px] mt-[9px] flex h-[23px] items-center justify-between rounded-[4px] border border-[#3d3d3d] bg-[#282828] pl-[8px]">Poisson Disk<Icon n="chev" s="size-[15px]" c="text-[#dcdcdc]" /></div>
          <In>Mesh</In><In>Selection</In>
          <div className="mx-[11px] mt-[2px] flex flex-col gap-[3.500px]">
            <Field a="Distance Min" b="0 m" /><Field a="Density Max" b="3.800" /><Field a="Density Factor" b="1.000" on /><Field a="Seed" b="0" />
          </div>
        </div>
      </Node>
      <Node pos="left-[759px] top-[203px] w-[158px] h-[133px]" title="Ico Sphere" ring="border-[#f0f0f0]">
        <div className="pt-[5px]">
          <Out>Mesh</Out><Out>UV Map</Out>
          <div className="mx-[12px] mt-[5px] flex flex-col gap-[3.500px]">
            <Field a="Radius" b="0.1 m" /><Field a="Subdivisions" b="1" />
          </div>
        </div>
      </Node>
      <Node pos="left-[978px] top-[32px] w-[157px] h-[340px]" title="Instance on Points">
        <div className="pt-[4px]">
          <Out>Instances</Out>
          <div className="h-[3.500px]" />
          <div className="pl-px">
            <In>Points</In><In>Selection</In><In>Instance</In>
            <In><div className="mr-[4px] size-[15px] rounded-[3px] bg-[#545454]" />Pick Instance</In>
            <In>Instance Index</In><In>Rotation:</In>
          </div>
          <VecField v="0°" axes={["X", "Y", "Z"]} />
          <div className="pl-px pt-px"><In>Scale:</In></div>
          <VecField v="1.000" axes={["X", "Y"]} />
        </div>
      </Node>
      <Node pos="left-[1319px] top-[106px] w-[157px] h-[80px]" title="Group Output" head="bg-[#1c1c1c]">
        <div className="pl-px pt-[4px]"><In>Geometry</In></div>
      </Node>

      <svg viewBox="2 666 1582 357" className="absolute inset-0 h-[357px] w-[1582px]">
        {DOTS.map(([x, y, f]) => <circle key={`${x}-${y}`} cx={x} cy={y} r="4.800" fill={f} stroke="#151515" strokeWidth=".8" />)}
        {DIAMONDS.map(([x, y, f, d]) => (
          <g key={`${x}-${y}`}>
            <path d={`M${x} ${y - 5.500}l5 5.500-5 5.500-5-5.500z`} fill={f} stroke="#151515" strokeWidth=".8" />
            {d && <circle cx={x} cy={y} r="1.500" fill="#141414" />}
          </g>
        ))}
        <circle cx="488" cy="859" r="5" fill="#303030" stroke="#828282" strokeWidth="1.500" />
        <circle cx="1321.500" cy="835" r="5" fill="#303030" stroke="#828282" strokeWidth="1.500" />
      </svg>

      <div className="relative flex h-[31px] items-center pl-[9px] pt-px">
        <EditorButton n="geo" />
        <div className="ml-[15px] flex w-[565px]">
          <Label w="w-[50px]">View</Label><Label w="w-[58px]">Select</Label><Label w="w-11">Add</Label><Label w="w-11">Node</Label>
        </div>
        <Group w="w-[266px]">
          <Cell w="w-[39px]"><Icon n="tree" /><Chev /></Cell>
          <div className="flex flex-1 items-center border-l border-[#3d3d3d] bg-[#1d1d1d] pl-[8px] text-[#e5e5e5]">Geometry Nodes</div>
          <Cell w="w-[25px]" bg="bg-[#545454] border-l border-[#3d3d3d]"><Icon n="shield" c="text-[#a0a0a0]" /></Cell>
          <Cell w="w-[25px]" bg="bg-[#545454] border-l border-[#3d3d3d]"><Icon n="copy" /></Cell>
          <Cell w="w-[25px]" bg="bg-[#545454] border-l border-[#3d3d3d]"><Icon n="close" /></Cell>
        </Group>
        <div className="ml-[8px]"><Icon n="pin" c="text-[#a0a0a0]" /></div>
        <div className="ml-auto flex pr-[9px]">
          <Group w="w-[25px]"><Cell w="w-[23px]" bg="bg-[#303030]"><Icon n="up" c="text-[#777]" /></Cell></Group>
          <div className="w-[6px]" />
          <Group w="w-[65px]"><Cell bg="bg-[#545454]"><Icon n="magnet" c="text-[#a0a0a0]" /></Cell><Cell w="w-[39px]"><Icon n="snapgrid" /><Chev /></Cell></Group>
          <div className="w-[6px]" />
          <Group w="w-[50px]"><Cell bg="bg-[#4772b3]"><Icon n="overlay" c="text-white" /></Cell><Cell w="w-6"><Chev /></Cell></Group>
        </div>
      </div>
      <div className="relative mt-[14px] flex h-[26px] items-center">
        <div className="flex h-[17px] w-[7px] items-center overflow-hidden rounded-r-[4px] bg-[#252525]"><svg viewBox="0 0 7 17" className="h-[17px] w-[7px]" fill="none" stroke="#a0a0a0" strokeWidth="1.300"><path d="M1 3.500l4 5-4 5" /></svg></div>
        <div className="w-[15px]" />
        <Crumb n="object" w="w-[76px]">Cube</Crumb>
        <div className="flex w-[26px]"><Icon n="right" c="text-[#c8c8c8]" /></div>
        <Crumb n="geo" w="w-[149px]">GeometryNodes</Crumb>
        <div className="flex w-[26px]"><Icon n="right" c="text-[#c8c8c8]" /></div>
        <Crumb n="tree" w="w-[160px]">Geometry Nodes</Crumb>
      </div>
      <div className="absolute left-[10px] top-[351px] h-[4px] w-[1561px] rounded-full bg-[#454545]/60" />
      <div className="absolute left-[1575px] top-[43px] h-[268px] w-[5px] rounded-full bg-[#303030]" />
      <div className="absolute right-0 top-[49px] flex h-[17px] w-[9px] items-center rounded-l-[4px] bg-[#1b1b1b]">
        <svg viewBox="0 0 9 17" className="h-[17px] w-[9px]" fill="none" stroke="#a0a0a0" strokeWidth="1.300"><path d="M7 3.500L2.500 8.500 7 13.500" /></svg>
      </div>
    </section>
  );
}

/* ---------- outliner ---------- */

const EyeCam = () => (
  <>
    <div className="flex w-[25px]"><Icon n="eye" c="text-[#e4e4e4]" s="size-[19px]" /></div>
    <div className="flex w-[36px]"><Icon n="cam" c="text-[#e4e4e4]" s="size-[19px]" /></div>
  </>
);

function Outliner() {
  const row = "flex h-[25px] shrink-0 items-center";
  return (
    <section className="relative flex h-[304px] flex-col overflow-hidden rounded-[6px] bg-[#282828] text-[#c4c4c4]">
      <div className="flex h-[31px] shrink-0 items-center pl-[10px]">
        <EditorButton n="outl" />
        <div className="ml-[6px] flex"><EditorButton n="layers" /></div>
        <div className="ml-[19px] flex h-[25px] w-[144px] items-center rounded-[5px] border border-[#3d3d3d] bg-[#1d1d1d] pl-[4px]"><Icon n="search" /></div>
        <div className="ml-[19px] flex"><EditorButton n="funnel" /></div>
        <div className="ml-[6px] h-[25px] w-[7px] rounded-l-[5px] bg-[#4a4a4a]" />
      </div>
      <div className="flex h-[26px] shrink-0 items-center pl-[27px] pt-[4px]"><Icon n="coll" c="text-[#d4d4d4]" s="size-[19px]" /><span className="pl-[8px]">Scene Collection</span></div>
      <div className={`${row} bg-[#2b2b2b] pl-[33px] pt-px`}>
        <svg viewBox="0 0 8 8" className="size-2"><path d="M1 0h6.500L4.200 8z" fill="#c4c4c4" /></svg>
        <div className="ml-[9px] flex h-[23px] w-6 items-center justify-center rounded-[5px] border border-[#777] bg-[#585858]"><Icon n="coll" c="text-[#e6e6e6]" s="size-[19px]" /></div>
        <span className="pl-[6px]">Collection</span>
        <div className="ml-auto flex items-center">
          <svg viewBox="0 0 13 13" className="mr-[8px] size-[13px]"><rect width="13" height="13" rx="1" fill="#e4e4e4" /><path d="M3 6.500l2.500 3L10.500 3" fill="none" stroke="#222" strokeWidth="2" /></svg>
          <EyeCam />
        </div>
      </div>
      <div className={`${row} bg-[#334d80] pl-[59px] pt-px`}>
        <svg viewBox="0 0 8 8" className="size-2"><path d="M0 .8L8 4 0 7.200z" fill="#c4c4c4" /></svg>
        <div className="ml-[8px] flex h-[23px] w-6 items-center justify-center rounded-[5px] border border-[#7d8fb3] bg-[#5b6f99]"><Icon n="meshObj" c="text-[#c9875a]" s="size-[19px]" /></div>
        <span className="w-[67px] pl-[6px] text-[#ffaf29]">Cube</span>
        <Icon n="wrench" c="text-[#6b93f0]" s="size-[19px]" />
        <div className="ml-[6px] flex"><Icon n="mesh" c="text-[#12b896]" /></div>
        <div className="ml-auto flex items-center"><EyeCam /></div>
      </div>
      <div className={`${row} bg-[#2b2b2b] pl-[59px] pt-px`}>
        <svg viewBox="0 0 8 8" className="size-2"><path d="M0 .8L8 4 0 7.200z" fill="#c4c4c4" /></svg>
        <div className="ml-[10px] flex w-[21px]"><Icon n="bulb" c="text-[#c58350]" /></div>
        <span className="w-[65px] pl-[7px]">Light</span>
        <Icon n="lightD" c="text-[#12a885]" />
        <div className="ml-auto flex items-center"><EyeCam /></div>
      </div>
      {[0, 1, 2, 3, 4, 5, 6].map((i) => <div key={i} className={`h-[25px] shrink-0 ${i % 2 ? "bg-[#2b2b2b]" : ""}`} />)}
      <div className="absolute left-[36px] top-[88px] h-[38px] w-px bg-[#777]" />
    </section>
  );
}

/* ---------- properties ---------- */

const TABS: [string, string, string][] = [
  ["tool", "text-[#b8b8b8]", "h-[35px] border-b"],
  ["rend", "text-[#b8b8b8]", "h-[35px] mt-[9px]"],
  ["outp", "text-[#b8b8b8]", "h-[35px]"],
  ["layers", "text-[#b8b8b8]", "h-[35px]"],
  ["scene", "text-[#b8b8b8]", "h-[35px]"],
  ["world", "text-[#bd575b]", "h-[35px] border-b"],
  ["collO", "text-[#d8d8d8]", "h-[35px] mt-[9px] border-b"],
  ["object", "text-[#c58350]", "h-[35px] mt-[9px]"],
  ["wrenchF", "text-[#6f9dff]", "h-[35px]"],
  ["part", "text-[#5b80cc]", "h-[35px]"],
  ["phys", "text-[#5b80cc]", "h-[35px]"],
  ["cons", "text-[#6a90df]", "h-[35px]"],
  ["mesh", "text-[#10b48c]", "h-[35px]"],
  ["mater", "text-[#b7585f]", "h-[35px] border-b"],
  ["tex", "text-[#b7585f]", "h-[35px] mt-[9px] border-b"],
];

function Properties() {
  return (
    <section className="mt-[3px] flex h-[644px] flex-col overflow-hidden rounded-[6px] bg-[#303030]">
      <div className="flex h-[31px] shrink-0 items-center pl-[10px]">
        <EditorButton n="props" />
        <div className="ml-[39px] flex h-[25px] w-[143px] items-center rounded-[5px] border border-[#3d3d3d] bg-[#1d1d1d] pl-[4px]"><Icon n="search" /></div>
        <div className="ml-auto mr-[10px] flex"><Group w="w-[25px]"><Cell w="w-[23px]"><Chev /></Cell></Group></div>
      </div>
      <div className="flex flex-1">
        <div className="w-[35px] shrink-0 bg-[#1d1d1d] pl-px pt-[10px]">
          {TABS.map(([n, c, cls]) => (
            <div key={n} className={`flex items-center justify-center border-[#171717] ${cls} ${n === "wrenchF" ? "rounded-l-[6px] bg-[#303030]" : ""}`}><Icon n={n} c={c} /></div>
          ))}
        </div>
        <div className="flex-1 pl-[11px] pr-[10px] pt-[10px]">
          <div className="flex h-[26px] items-center text-[#e3e3e3]">
            <div className="flex w-[31px] pl-px"><Icon n="object" /></div><div className="w-[42px]">Cube</div>
            <div className="flex w-[24px]"><Icon n="right" c="text-[#c8c8c8]" /></div>
            <div className="flex w-[30px]"><Icon n="geo" /></div><div>GeometryNodes</div>
            <div className="ml-auto pr-[2px]"><Icon n="pin" c="text-[#888]" /></div>
          </div>
          <div className="mt-[19px] flex h-[25px] items-center justify-between rounded-[5px] border border-[#3d3d3d] bg-[#282828] pl-[8px] pr-0 text-[#e5e5e5]">Add Modifier<Chev /></div>
          <div className="mt-[12px] flex h-[138px] flex-col rounded-[5px] border border-[#4772b3] bg-[#3d3d3d] text-[#e3e3e3]">
            <div className="mt-[3px] flex h-6 items-center">
              <div className="flex w-[26px] pl-[6px]"><Icon n="bigChev" c="text-[#a8a8a8]" s="size-[17px]" /></div>
              <div className="flex w-[33px]"><Icon n="geo" /></div>
              <div className="flex h-6 w-[156px] overflow-hidden rounded-[4px] bg-[#282828]">
                <div className="flex w-[44px] items-center bg-[#1d1d1d] pl-[9px]">G...</div>
                <Cell w="w-[22px]" bg="bg-[#545454]"><Icon n="mesh" /></Cell>
                <Cell w="w-[23px]" bg="bg-[#4772b3] border-l border-[#3a5c92]"><Icon n="editm" c="text-white" /></Cell>
                <Cell w="w-[22px]" bg="bg-[#4772b3] border-l border-[#3a5c92]"><Icon n="monitor" c="text-white" /></Cell>
                <Cell w="w-[23px]" bg="bg-[#4772b3] border-l border-[#3a5c92]"><Icon n="camB" c="text-white" /></Cell>
                <Cell w="w-[22px]"><Chev /></Cell>
              </div>
              <div className="ml-[2px] flex"><Icon n="close" c="text-[#d8d8d8]" s="size-[19px]" /></div>
              <svg viewBox="0 0 15 9" className="mb-[3px] ml-[16px] h-[9px] w-[15px]" fill="#999">
                {[0, 4, 8, 12].map((x) => [0, 3.500, 7].map((y) => <rect key={`${x}${y}`} x={x} y={y} width="2" height="1.500" />))}
              </svg>
            </div>
            <div className="ml-[9px] mt-[13px] flex h-6 w-[256px] overflow-hidden rounded-[4px] bg-[#282828]">
              <Cell w="w-[38px]"><Icon n="tree" /><Chev /></Cell>
              <div className="flex flex-1 items-center border-l border-[#3d3d3d] bg-[#1d1d1d] pl-[9px]">Geometry Nodes</div>
              <Cell w="w-[25px]" bg="bg-[#545454] border-l border-[#3d3d3d]"><Icon n="shield" c="text-[#a0a0a0]" /></Cell>
              <Cell w="w-[25px]" bg="bg-[#545454] border-l border-[#3d3d3d]"><Icon n="copy" /></Cell>
              <Cell w="w-[25px]" bg="bg-[#545454] border-l border-[#3d3d3d]"><Icon n="close" /></Cell>
            </div>
            <div className="mt-[12px] flex h-[31px] items-center pl-[22px]"><Icon n="right" c="text-[#a8a8a8]" s="size-[17px]" /><span className="pl-[3px]">Output Attributes</span></div>
            <div className="flex h-[31px] items-center pl-[22px]"><Icon n="right" c="text-[#a8a8a8]" s="size-[17px]" /><span className="pl-[3px]">Internal Dependencies</span></div>
          </div>
        </div>
      </div>
    </section>
  );
}

/* ---------- status bar ---------- */

const Mouse = ({ d }: { d: string }) => (
  <svg viewBox="0 0 14 20" className="mr-[14px] h-5 w-[14px] shrink-0" fill="none" stroke="#8a8a8a" strokeWidth="1.200">
    <rect x=".7" y="1" width="12.600" height="18" rx="4.500" /><path d={d} fill="#a8a8a8" stroke="none" />
  </svg>
);

export default function App() {
  return (
    <div className="flex h-[1050px] w-[1920px] flex-col overflow-hidden border border-[#6a6a6a] bg-[#161616] font-['DejaVu_Sans',sans-serif] text-[13px] leading-[16px] tracking-[-0.020px] whitespace-nowrap [text-shadow:0_1px_1px_rgba(0,0,0,.5)]">
      <TitleBar />
      <TopBar />
      <div className="flex h-[954px] gap-[3px] pl-px pt-[2px]">
        <div className="flex w-[1582px] shrink-0 flex-col">
          <div className="flex h-[591px] gap-[3px]">
            <Spreadsheet />
            <Viewport />
          </div>
          <NodeEditor />
        </div>
        <div className="w-[331px] shrink-0">
          <Outliner />
          <Properties />
        </div>
      </div>
      <div className="flex flex-1 items-center bg-[#1d1d1d] pl-[15px] text-[#989898]">
        <Mouse d="M6 1.500H5a4 4 0 0 0-4 4V9h5z" /><Label w="w-[253px]" c="">Select</Label>
        <Mouse d="M5 4h4v6H5z" /><Label w="w-[253px]" c="">Rotate View</Label>
        <Mouse d="M8 1.500h1a4 4 0 0 1 4 4V9H8z" /><Label w="w-[253px]" c="">Object Context Menu</Label>
        <div className="ml-auto pr-[10px]">3.6.0</div>
      </div>
    </div>
  );
}
